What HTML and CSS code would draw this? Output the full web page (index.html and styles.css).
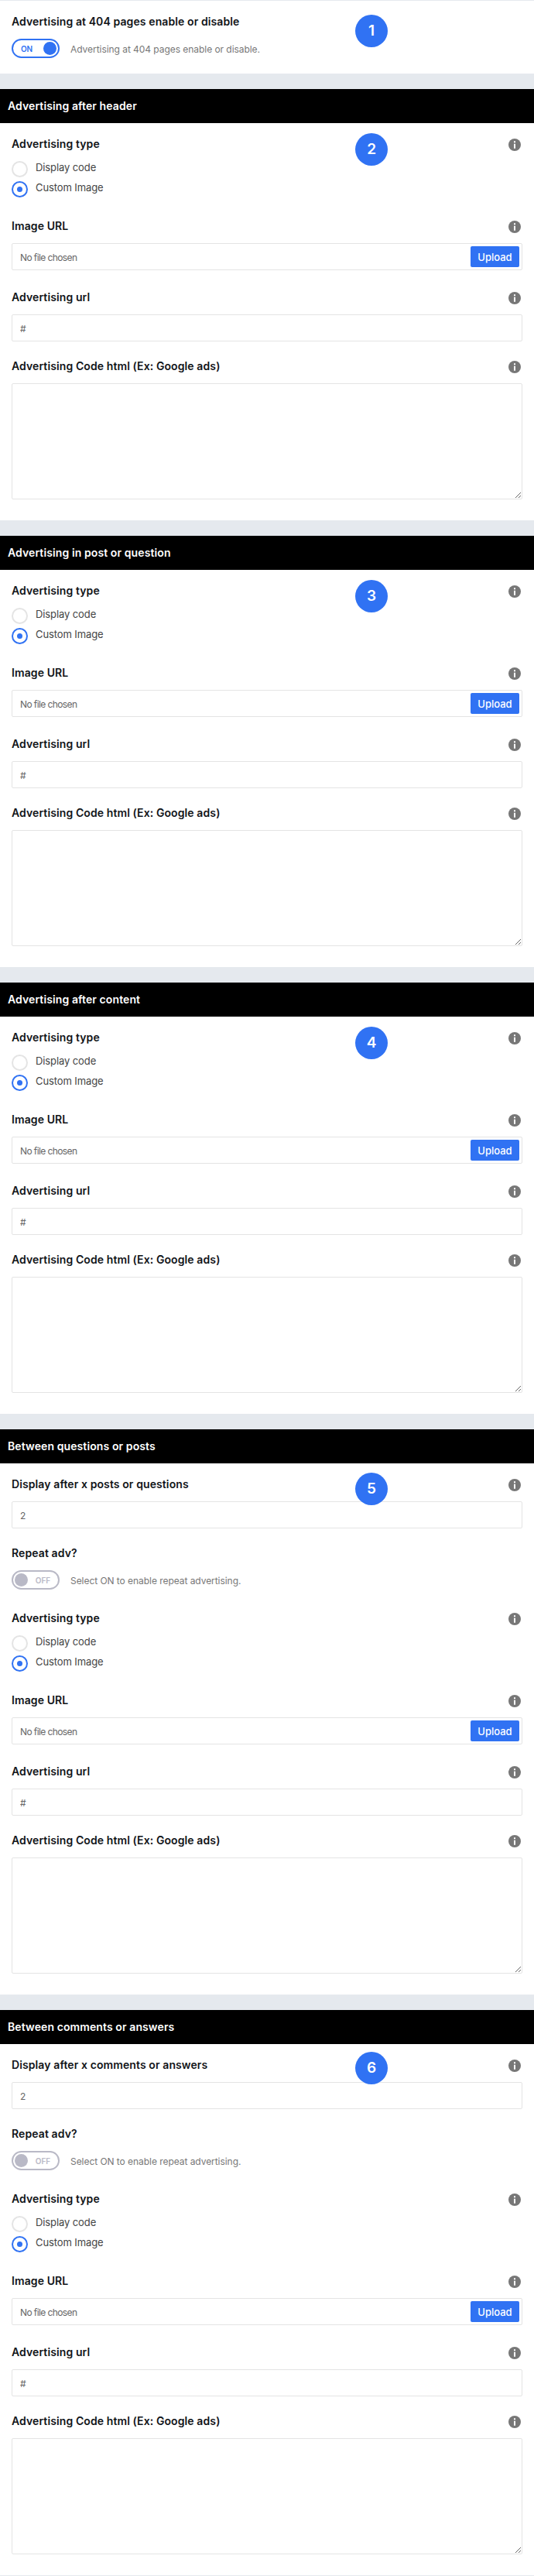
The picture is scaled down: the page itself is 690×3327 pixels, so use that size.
FILE: index.html
```
<!DOCTYPE html>
<html lang="en">
<head>
    <title>Advertising</title>
    <meta charset="UTF-8">
    <meta name="viewport" content="width=device-width, initial-scale=1.0">
    <link rel="stylesheet" href="styles.css">
</head>
<body>
    <svg class="sprite">
        <symbol id="info" viewBox="0 0 16 16">
            <circle cx="8" cy="8" r="8" fill="#777"/>
            <path d="M7 3.2h2v2H7zM7 6.7h2v6H7z" fill="#fff"/>
        </symbol>
    </svg>

    <div class="section">
        <div class="section-body">
            <span class="badge">1</span>
            <div class="field">
                <div class="label"><h4>Advertising at 404 pages enable or disable</h4></div>
                <div class="toggle-row">
                    <span class="toggle on"><span class="toggle-text">ON</span><span class="knob"></span></span>
                    <span class="desc">Advertising at 404 pages enable or disable.</span>
                </div>
            </div>
        </div>
    </div>

    <div class="section">
        <h3 class="section-title">Advertising after header</h3>
        <div class="section-body">
            <span class="badge">2</span>
            <div class="field">
                <div class="label"><h4>Advertising type</h4><svg class="info"><use href="#info"/></svg></div>
                <div class="radios">
                    <label class="radio"><span class="circle"></span>Display code</label>
                    <label class="radio checked"><span class="circle"></span>Custom Image</label>
                </div>
            </div>
            <div class="field">
                <div class="label"><h4>Image URL</h4><svg class="info"><use href="#info"/></svg></div>
                <div class="file"><span>No file chosen</span><button class="upload">Upload</button></div>
            </div>
            <div class="field">
                <div class="label"><h4>Advertising url</h4><svg class="info"><use href="#info"/></svg></div>
                <input class="text" type="text" value="#">
            </div>
            <div class="field">
                <div class="label"><h4>Advertising Code html (Ex: Google ads)</h4><svg class="info"><use href="#info"/></svg></div>
                <textarea class="code"></textarea>
            </div>
        </div>
    </div>

    <div class="section">
        <h3 class="section-title">Advertising in post or question</h3>
        <div class="section-body">
            <span class="badge">3</span>
            <div class="field">
                <div class="label"><h4>Advertising type</h4><svg class="info"><use href="#info"/></svg></div>
                <div class="radios">
                    <label class="radio"><span class="circle"></span>Display code</label>
                    <label class="radio checked"><span class="circle"></span>Custom Image</label>
                </div>
            </div>
            <div class="field">
                <div class="label"><h4>Image URL</h4><svg class="info"><use href="#info"/></svg></div>
                <div class="file"><span>No file chosen</span><button class="upload">Upload</button></div>
            </div>
            <div class="field">
                <div class="label"><h4>Advertising url</h4><svg class="info"><use href="#info"/></svg></div>
                <input class="text" type="text" value="#">
            </div>
            <div class="field">
                <div class="label"><h4>Advertising Code html (Ex: Google ads)</h4><svg class="info"><use href="#info"/></svg></div>
                <textarea class="code"></textarea>
            </div>
        </div>
    </div>

    <div class="section">
        <h3 class="section-title">Advertising after content</h3>
        <div class="section-body">
            <span class="badge">4</span>
            <div class="field">
                <div class="label"><h4>Advertising type</h4><svg class="info"><use href="#info"/></svg></div>
                <div class="radios">
                    <label class="radio"><span class="circle"></span>Display code</label>
                    <label class="radio checked"><span class="circle"></span>Custom Image</label>
                </div>
            </div>
            <div class="field">
                <div class="label"><h4>Image URL</h4><svg class="info"><use href="#info"/></svg></div>
                <div class="file"><span>No file chosen</span><button class="upload">Upload</button></div>
            </div>
            <div class="field">
                <div class="label"><h4>Advertising url</h4><svg class="info"><use href="#info"/></svg></div>
                <input class="text" type="text" value="#">
            </div>
            <div class="field">
                <div class="label"><h4>Advertising Code html (Ex: Google ads)</h4><svg class="info"><use href="#info"/></svg></div>
                <textarea class="code"></textarea>
            </div>
        </div>
    </div>

    <div class="section">
        <h3 class="section-title">Between questions or posts</h3>
        <div class="section-body">
            <span class="badge badge-high">5</span>
            <div class="field">
                <div class="label"><h4>Display after x posts or questions</h4><svg class="info"><use href="#info"/></svg></div>
                <input class="text" type="text" value="2">
            </div>
            <div class="field field-switch">
                <div class="label"><h4>Repeat adv?</h4></div>
                <div class="toggle-row">
                    <span class="toggle"><span class="knob"></span><span class="toggle-text">OFF</span></span>
                    <span class="desc">Select ON to enable repeat advertising.</span>
                </div>
            </div>
            <div class="field">
                <div class="label"><h4>Advertising type</h4><svg class="info"><use href="#info"/></svg></div>
                <div class="radios">
                    <label class="radio"><span class="circle"></span>Display code</label>
                    <label class="radio checked"><span class="circle"></span>Custom Image</label>
                </div>
            </div>
            <div class="field">
                <div class="label"><h4>Image URL</h4><svg class="info"><use href="#info"/></svg></div>
                <div class="file"><span>No file chosen</span><button class="upload">Upload</button></div>
            </div>
            <div class="field">
                <div class="label"><h4>Advertising url</h4><svg class="info"><use href="#info"/></svg></div>
                <input class="text" type="text" value="#">
            </div>
            <div class="field">
                <div class="label"><h4>Advertising Code html (Ex: Google ads)</h4><svg class="info"><use href="#info"/></svg></div>
                <textarea class="code"></textarea>
            </div>
        </div>
    </div>

    <div class="section">
        <h3 class="section-title">Between comments or answers</h3>
        <div class="section-body">
            <span class="badge badge-high">6</span>
            <div class="field">
                <div class="label"><h4>Display after x comments or answers</h4><svg class="info"><use href="#info"/></svg></div>
                <input class="text" type="text" value="2">
            </div>
            <div class="field field-switch">
                <div class="label"><h4>Repeat adv?</h4></div>
                <div class="toggle-row">
                    <span class="toggle"><span class="knob"></span><span class="toggle-text">OFF</span></span>
                    <span class="desc">Select ON to enable repeat advertising.</span>
                </div>
            </div>
            <div class="field">
                <div class="label"><h4>Advertising type</h4><svg class="info"><use href="#info"/></svg></div>
                <div class="radios">
                    <label class="radio"><span class="circle"></span>Display code</label>
                    <label class="radio checked"><span class="circle"></span>Custom Image</label>
                </div>
            </div>
            <div class="field">
                <div class="label"><h4>Image URL</h4><svg class="info"><use href="#info"/></svg></div>
                <div class="file"><span>No file chosen</span><button class="upload">Upload</button></div>
            </div>
            <div class="field">
                <div class="label"><h4>Advertising url</h4><svg class="info"><use href="#info"/></svg></div>
                <input class="text" type="text" value="#">
            </div>
            <div class="field">
                <div class="label"><h4>Advertising Code html (Ex: Google ads)</h4><svg class="info"><use href="#info"/></svg></div>
                <textarea class="code"></textarea>
            </div>
        </div>
    </div>
</body>
</html>
```

FILE: styles.css
```
* {
    box-sizing: border-box;
}
body {
    margin: 0;
    padding: 1px 0;
    background: #e5e9ee;
    font-family: Inter, "Liberation Sans", sans-serif;
    font-size: 13px;
    letter-spacing: -0.1px;
    color: #444;
    display: flex;
    flex-direction: column;
    gap: 20px;
}
h3, h4 {
    margin: 0;
    font-size: 14px;
    font-weight: 600;
    letter-spacing: 0.1px;
}
.sprite {
    display: none;
}
.section {
    background: #fff;
}
.section-title {
    height: 44px;
    line-height: 44px;
    padding-left: 10px;
    background: #000;
    color: #fff;
}
.section-body {
    position: relative;
    padding: 17px 15px 20px;
}
.section-title + .section-body {
    padding-bottom: 27px;
}
.badge {
    position: absolute;
    left: 459px;
    top: 13px;
    width: 42px;
    height: 42px;
    border-radius: 50%;
    background: #3072f3;
    color: #fff;
    font-size: 19px;
    font-weight: 600;
    line-height: 42px;
    text-align: center;
}
.section:first-of-type .badge {
    top: 18px;
}
.badge-high {
    top: 12px;
}
.section:last-child .badge-high {
    top: 10px;
}
.field + .field {
    margin-top: 22px;
}
.field-switch + .field {
    margin-top: 27px;
}
.label {
    display: flex;
    justify-content: space-between;
    height: 20px;
    line-height: 20px;
    margin-bottom: 12px;
    padding-right: 2px;
    color: #111418;
}
.info {
    width: 16px;
    height: 16px;
    margin-top: 3px;
}
.radios {
    display: flex;
    flex-direction: column;
    gap: 5px;
    padding-bottom: 5px;
}
.radio {
    display: flex;
    gap: 10px;
    height: 21px;
    line-height: 17px;
}
.circle {
    width: 21px;
    height: 21px;
    border: 2px solid #e4e4e4;
    border-radius: 50%;
    display: flex;
    align-items: center;
    justify-content: center;
}
.checked .circle {
    border-color: #3072f3;
}
.checked .circle::after {
    content: "";
    width: 7px;
    height: 7px;
    border-radius: 50%;
    background: #3072f3;
}
.file {
    display: flex;
    align-items: center;
    justify-content: space-between;
    height: 35px;
    padding: 0 3px 0 10px;
    margin-bottom: 25px;
    border: 1px solid #e4e4e4;
    border-radius: 2px;
    font-size: 12px;
    letter-spacing: -0.6px;
    color: #666;
}
.file span {
    padding-top: 2px;
}
.upload {
    width: 63px;
    height: 27px;
    padding: 0;
    border: 0;
    border-radius: 2px;
    background: #3072f3;
    color: #fff;
    font-family: inherit;
    font-size: 13px;
    font-weight: 500;
}
.text {
    display: block;
    width: 100%;
    height: 35px;
    padding: 2px 10px 0;
    border: 1px solid #e4e4e4;
    border-radius: 2px;
    font-family: inherit;
    font-size: 12px;
    color: #666;
}
.code {
    display: block;
    width: 100%;
    height: 150px;
    border: 1px solid #e4e4e4;
    border-radius: 2px;
    resize: vertical;
}
.toggle-row {
    display: flex;
    gap: 14px;
    height: 25px;
}
.toggle {
    display: flex;
    align-items: center;
    justify-content: space-between;
    width: 62px;
    height: 25px;
    padding: 0 10px 0 2px;
    border: 2px solid #b9b9c6;
    border-radius: 13px;
    color: #b9b9c6;
    font-size: 10px;
    font-weight: 600;
}
.toggle.on {
    padding: 0 2px 0 10px;
    border-color: #3072f3;
    color: #3072f3;
}
.knob {
    width: 17px;
    height: 17px;
    border-radius: 50%;
    background: #b9b9c6;
}
.on .knob {
    background: #3072f3;
}
.desc {
    font-size: 12px;
    line-height: 27px;
    letter-spacing: -0.05px;
    color: #777;
}
```
